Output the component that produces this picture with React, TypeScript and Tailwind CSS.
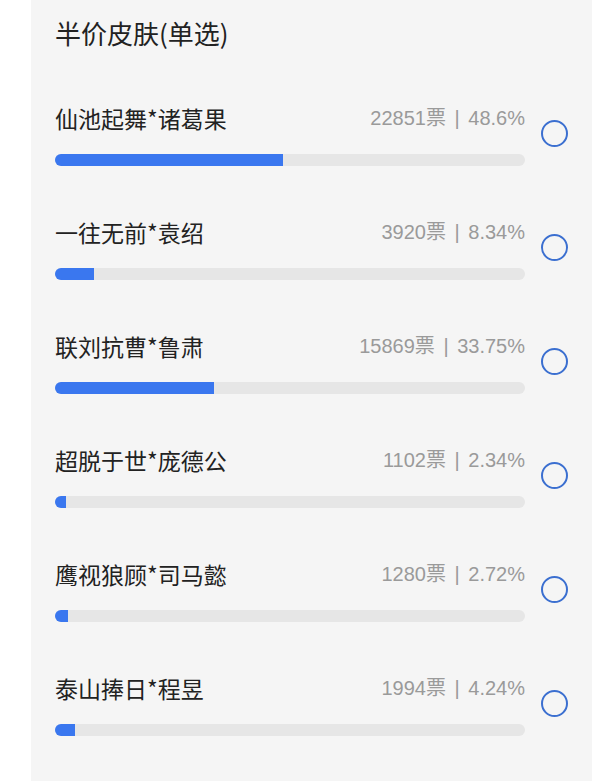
const options = [
  { name: '仙池起舞*诸葛果', votes: 22851, pct: '48.6' },
  { name: '一往无前*袁绍', votes: 3920, pct: '8.34' },
  { name: '联刘抗曹*鲁肃', votes: 15869, pct: '33.75' },
  { name: '超脱于世*庞德公', votes: 1102, pct: '2.34' },
  { name: '鹰视狼顾*司马懿', votes: 1280, pct: '2.72' },
  { name: '泰山捧日*程昱', votes: 1994, pct: '4.24' },
];

function OptionRow({ name, votes, pct }: { name: string; votes: number; pct: string }) {
  return (
    <div className="flex items-start">
      <div className="w-[470px]">
        <div className="flex h-[28px] items-center justify-between">
          <span className="text-[23px] leading-[28px] text-[#222]">{name}</span>
          <span
            className="text-[20px] leading-[28px] text-[#9a9a9a]"
            style={{ fontFamily: '"Liberation Sans", "Noto Sans CJK SC", sans-serif' }}
          >
            {votes}票 <span className="mx-[3px]">|</span> {pct}%
          </span>
        </div>
        <div className="mt-[22px] h-[12px] w-full overflow-hidden rounded-full bg-[#e6e6e6]">
          <div className="h-full bg-[#3a77ef]" style={{ width: `${pct}%` }} />
        </div>
      </div>
      <div className="ml-[16px] mt-[16px] h-[27px] w-[27px] rounded-full border-2 border-[#3b6fd0]" />
    </div>
  );
}

export default function App() {
  return (
    <div
      className="min-h-[781px] bg-white pl-[31px] pr-[8px]"
      style={{ fontFamily: '"Noto Sans CJK SC", "Noto Sans", sans-serif' }}
    >
      <div className="min-h-[781px] bg-[#f5f5f5] px-[24px] pt-[18px]">
        <h1 className="text-[26px] leading-[30px] font-normal text-[#222]">半价皮肤(单选)</h1>
        <div className="mt-[56px] flex flex-col gap-[52px]">
          {options.map((o) => (
            <OptionRow key={o.name} {...o} />
          ))}
        </div>
      </div>
    </div>
  );
}
